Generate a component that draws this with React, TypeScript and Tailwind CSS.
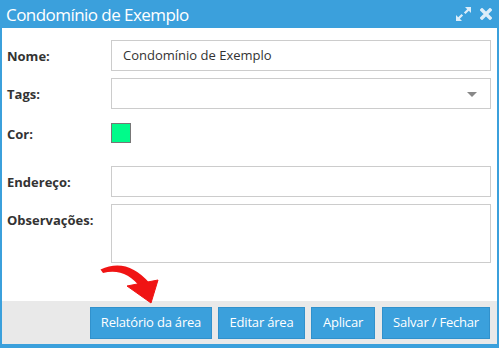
import React from "react";

const labelCls = "pt-[6px] text-[13px] font-bold text-[#333] leading-5";
const inputCls = "h-[31px] w-full border border-[#ccc] bg-white px-[11px] text-[13px] text-[#333] leading-[29px]";

const Button = ({ label, width }: { label: string; width: string }) => (
  <button
    className={`h-[32px] border border-[#3191cc] bg-[#3ba0dc] text-[13px] tracking-[-0.2px] text-white ${width}`}
  >
    {label}
  </button>
);

const App = () => {
  return (
    <div
      className="flex h-[348px] w-[499px] flex-col bg-[#3ba0dc]"
      style={{ fontFamily: "'Open Sans', sans-serif" }}
    >
      <div className="flex h-[28px] items-center justify-between pl-[6px] pr-[7px]">
        <span className="text-[17px] tracking-[-0.55px] text-white leading-none">Condomínio de Exemplo</span>
        <div className="flex items-center gap-[9px]">
          <svg width="15" height="14" viewBox="0 0 15 14" fill="#dcedf9">
            <path d="M9 0h6v6l-2.2-2.2-3.3 3.3-1.6-1.6 3.3-3.3z" />
            <path d="M6 14H0V8l2.2 2.2 3.3-3.3 1.6 1.6-3.3 3.3z" />
          </svg>
          <svg width="12" height="12" viewBox="0 0 12 12">
            <path d="M2 2l8 8M10 2l-8 8" stroke="#dcedf9" strokeWidth="3.4" strokeLinecap="square" />
          </svg>
        </div>
      </div>

      <div className="mx-[2px] flex flex-1 flex-col bg-white">
        <div className="grid flex-1 grid-cols-[104px_1fr] content-start gap-x-0 gap-y-[7px] pl-[5px] pr-[6px] pt-[12px]">
          <div className={labelCls}>Nome:</div>
          <div className={inputCls}>Condomínio de Exemplo</div>

          <div className={labelCls}>Tags:</div>
          <div className={`${inputCls} relative`}>
            <span className="absolute right-[13px] top-[13px] h-0 w-0 border-x-[5px] border-t-[5px] border-x-transparent border-t-[#888]" />
          </div>

          <div className={`${labelCls} pt-[8px]`}>Cor:</div>
          <div className="h-[43px] pt-[7px]">
            <div className="h-[20px] w-[20px] border border-[#777] bg-[#00fb8a]" />
          </div>

          <div className={labelCls}>Endereço:</div>
          <div className={inputCls} />

          <div className={labelCls}>Observações:</div>
          <div className="h-[59px] w-full border border-[#ccc]" />
        </div>

        <div className="relative flex h-[43px] items-center justify-end bg-[#e9e9e9] pr-[7px]">
          <svg
            className="absolute left-[94px] top-[-39px]"
            width="66"
            height="44"
            viewBox="96 262 66 44"
          >
            <path
              d="M100.5 269.5 Q127 257 149.5 283 L141 288 Q125 267 103 273 Z"
              fill="#f01414"
            />
            <path d="M127 286 L158 280 L151 303 Z" fill="#f01414" strokeLinejoin="round" stroke="#f01414" strokeWidth="1" />
          </svg>
          <Button label="Relatório da área" width="w-[122px]" />
          <div className="w-[6px]" />
          <Button label="Editar área" width="w-[87px]" />
          <div className="w-[6px]" />
          <Button label="Aplicar" width="w-[64px]" />
          <div className="w-[7px]" />
          <Button label="Salvar / Fechar" width="w-[108px]" />
        </div>
      </div>
      <div className="h-[4px]" />
    </div>
  );
};

export default App;
